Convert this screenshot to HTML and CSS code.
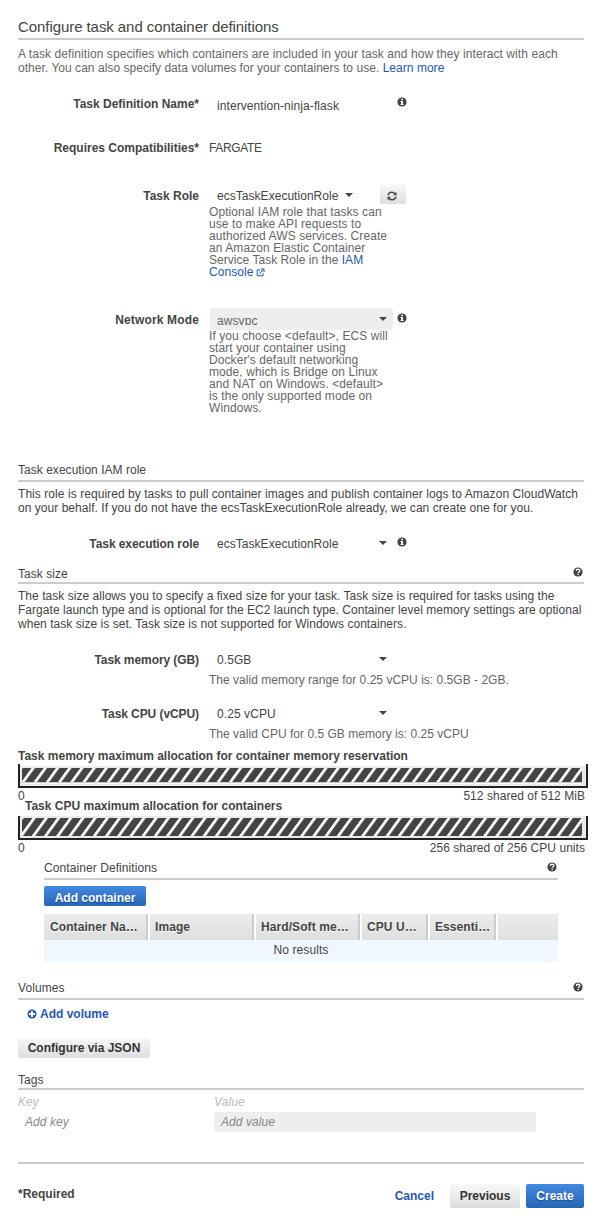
FILE: index.html
```html
<!DOCTYPE html>
<html lang="en">
<head>
<meta charset="utf-8">
<title>Configure task and container definitions</title>
<link rel="stylesheet" href="styles.css">
</head>
<body>
<svg width="0" height="0" class="defs">
  <symbol id="info" viewBox="0 0 10 10"><circle cx="5" cy="5" r="4.6" fill="#444"/><path d="M4.2 1.8h1.700v1.400H4.200zM3.500 4.100h2.400v3h.700v1H3.500v-1h.700V5.100h-.700z" fill="#fff"/></symbol>
  <symbol id="help" viewBox="0 0 10 10"><circle cx="5" cy="5" r="4.6" fill="#444"/><path d="M3.300 3.900C3.300 1.700 6.800 1.700 6.800 3.800 6.800 5 5.200 4.900 5.200 6.100" fill="none" stroke="#fff" stroke-width="1.300"/><path d="M4.500 6.800h1.400v1.300H4.500z" fill="#fff"/></symbol>
  <symbol id="caret" viewBox="0 0 8 4"><path d="M0 0h8L4 4z" fill="#444"/></symbol>
</svg>
<main class="page">
  <h1 class="title">Configure task and container definitions</h1>
  <p class="intro muted">A task definition specifies which containers are included in your task and how they interact with each<br><span class="tight">other. You can also specify data volumes for your containers to use. <a>Learn more</a></span></p>

  <div class="field name-field">
    <span class="label">Task Definition Name*</span>
    <span class="control input">intervention-ninja-flask</span>
    <svg class="icon"><use href="#info"/></svg>
  </div>
  <div class="field compat-field">
    <span class="label">Requires Compatibilities*</span>
    <span class="plain">FARGATE</span>
  </div>
  <div class="field role-field">
    <span class="label">Task Role</span>
    <span class="control short">ecsTaskExecutionRole<svg class="caret"><use href="#caret"/></svg></span>
    <span class="button refresh"><svg width="10" height="10" viewBox="0 0 10 10" fill="none" stroke="#444" stroke-width="1.500"><path d="M1 4.300C1.600 1 5.800.300 7.900 2.600M9 5.700C8.400 9 4.200 9.700 2.100 7.400"/><path d="M9.500.700v3.500H6zM.500 9.300V5.800H4z" fill="#444" stroke="none"/></svg></span>
  </div>
  <p class="hint muted">Optional IAM role that tasks can<br>use to make API requests to<br>authorized AWS services. Create<br>an Amazon Elastic Container<br><span class="tight">Service Task Role in the <a>IAM</a></span><br><a>Console</a><svg class="external" viewBox="0 0 9 9" fill="none" stroke="#1e57b5"><path d="M4.500 2H1.200v5.800H7V5M3.500 5.500L7.500 1.500M5 1h3v3"/></svg></p>

  <div class="field network-field">
    <span class="label">Network Mode</span>
    <span class="control disabled"><span class="clip">awsvpc</span><svg class="caret"><use href="#caret"/></svg></span>
    <svg class="icon"><use href="#info"/></svg>
  </div>
  <p class="hint muted">If you choose &lt;default&gt;, ECS will<br>start your container using<br>Docker's default networking<br>mode, which is Bridge on Linux<br>and NAT on Windows. &lt;default&gt;<br>is the only supported mode on<br>Windows.</p>

  <h2 class="section exec-section">Task execution IAM role</h2>
  <p class="exec-copy">This role is required by tasks to pull container images and publish container logs to Amazon CloudWatch<br><span class="tight">on your behalf. If you do not have the ecsTaskExecutionRole already, we can create one for you.</span></p>
  <div class="field exec-field">
    <span class="label">Task execution role</span>
    <span class="control tight">ecsTaskExecutionRole<svg class="caret"><use href="#caret"/></svg></span>
    <svg class="icon"><use href="#info"/></svg>
  </div>

  <h2 class="section size-section">Task size<svg class="icon"><use href="#help"/></svg></h2>
  <p class="size-copy">The task size allows you to specify a fixed size for your task. Task size is required for tasks using the<br>Fargate launch type and is optional for the EC2 launch type. Container level memory settings are optional<br>when task size is set. Task size is not supported for Windows containers.</p>
  <div class="field memory-field">
    <span class="label">Task memory (GB)</span>
    <span class="control">0.5GB<svg class="caret"><use href="#caret"/></svg></span>
  </div>
  <p class="range muted">The valid memory range for 0.25 vCPU is: 0.5GB - 2GB.</p>
  <div class="field cpu-field">
    <span class="label">Task CPU (vCPU)</span>
    <span class="control">0.25 vCPU<svg class="caret"><use href="#caret"/></svg></span>
  </div>
  <p class="range muted">The valid CPU for 0.5 GB memory is: 0.25 vCPU</p>

  <h3 class="meter-title">Task memory maximum allocation for container memory reservation</h3>
  <div class="meter memory-meter"><svg width="560" height="16"><defs><pattern id="s1" width="12.200" height="14" patternUnits="userSpaceOnUse" patternTransform="translate(9.500 0) skewX(-36)"><path d="M3.400 0h8.800v14H3.400z" fill="#444"/></pattern></defs><rect width="560" height="16" fill="#fff"/><rect width="560" height="14" fill="url(#s1)"/><rect y="14" width="560" height="1" fill="#ccc"/></svg></div>
  <div class="meter-scale"><span>0</span><span class="memory-total">512 shared of 512 MiB</span></div>
  <h3 class="meter-title cpu-title">Task CPU maximum allocation for containers</h3>
  <div class="meter cpu-meter"><svg width="560" height="18"><defs><pattern id="s2" width="12.200" height="18" patternUnits="userSpaceOnUse" patternTransform="translate(10.500 0) skewX(-36)"><path d="M3.400 0h8.800v18H3.400z" fill="#444"/></pattern></defs><rect width="560" height="18" fill="#fff"/><rect width="560" height="18" fill="url(#s2)"/></svg></div>
  <div class="meter-scale"><span>0</span><span class="cpu-total">256 shared of 256 CPU units</span></div>

  <section class="containers">
    <h2 class="section raised">Container Definitions<svg class="icon"><use href="#help"/></svg></h2>
    <span class="button primary add">Add container</span>
    <div class="table-head">
      <span>Container Na…</span><span>Image</span><span>Hard/Soft me…</span><span>CPU U…</span><span>Essenti…</span><span></span>
    </div>
    <div class="empty">No results</div>
  </section>

  <h2 class="section raised volumes">Volumes<svg class="icon"><use href="#help"/></svg></h2>
  <div class="add-volume"><svg width="10" height="10" viewBox="0 0 10 10"><circle cx="5" cy="5" r="4.500" fill="#1e57b5"/><path d="M4 2h2v2h2v2H6v2H4V6H2V4h2z" fill="#fff"/></svg><a>Add volume</a></div>
  <span class="button configure">Configure via JSON</span>

  <h2 class="section tags">Tags</h2>
  <div class="tag-grid">
    <span class="tag-label">Key</span><span class="tag-label">Value</span>
    <span class="tag-input">Add key</span><span class="tag-input filled">Add value</span>
  </div>

  <footer class="footer">
    <span class="required">*Required</span>
    <a class="cancel">Cancel</a>
    <span class="button previous">Previous</span>
    <span class="button primary create">Create</span>
  </footer>
</main>
</body>
</html>
```
FILE: styles.css
```css
* { box-sizing: border-box; }
body { margin: 0; background: #fff; }
.defs { display: block; }
.page {
  width: 616px; height: 1228px; padding: 16px 32px 0 18px; overflow: hidden;
  font: 12px/14px "Liberation Sans", Arial, sans-serif; letter-spacing: 0.08px;
  color: #444; white-space: nowrap;
}
h1, h2, h3, p { margin: 0; font-weight: normal; font-size: 12px; }
a { color: #1e57b5; }
svg { flex: none; }
.muted { color: #666; }
.tight { letter-spacing: 0.035px; }
.title { height: 24px; line-height: 22px; font-size: 15px; letter-spacing: -0.07px; border-bottom: 2px solid #ccc; }
.intro { margin-top: 7px; }
.icon { width: 10px; height: 10px; }
.caret { width: 8px; height: 4px; margin-left: auto; }

.field { display: flex; align-items: center; height: 22px; }
.label { width: 182px; margin-right: 10px; padding-right: 1px; text-align: right; font-weight: bold; letter-spacing: 0; }
.plain { margin-left: -1px; letter-spacing: -0.35px; }
.control { display: flex; align-items: center; width: 183px; height: 22px; padding: 2px 6px 0 7px; border-radius: 2px; }
.control .caret { margin-top: -3px; }
.field .icon { margin: -2px 0 0 4px; }
.short { width: 150px; padding-right: 7px; letter-spacing: 0.035px; }
.disabled { background: #eee; color: #666; }
.clip { height: 10px; overflow: hidden; line-height: 12px; }
.name-field { margin-top: 19px; }
.name-field .label { margin-top: -2px; }
.name-field .icon { margin-top: -6px; }
.compat-field { margin-top: 21px; }
.role-field { margin-top: 25px; }
.role-field .label, .network-field .label { padding-top: 2px; }
.network-field .label { letter-spacing: 0.15px; }
.hint { margin-left: 191px; line-height: 12px; }
.external { width: 9px; height: 9px; margin-left: 2px; vertical-align: -1px; }
.network-field { margin-top: 30px; }
.exec-field .label, .memory-field .label, .cpu-field .label { padding-top: 2px; }
.exec-field .label, .memory-field .label, .cpu-field .label { letter-spacing: -0.08px; }

.section { display: flex; justify-content: space-between; align-items: center; height: 20px; padding-top: 1px; border-bottom: 2px solid #ccc; letter-spacing: 0.03px; }
.section .icon { margin: -3px 1px 0 0; }
.raised { padding: 0 0 2px; letter-spacing: 0.08px; }
.exec-section { margin-top: 49px; height: 19px; padding-top: 0; align-items: flex-start; }
.exec-copy { margin-top: 5px; letter-spacing: 0.06px; }
.exec-field { margin-top: 17px; }
.size-section { margin-top: 10px; }
.size-copy { margin-top: 5px; letter-spacing: 0.035px; }
.memory-field { margin-top: 17px; }
.range { margin: 3px 0 0 191px; letter-spacing: 0.02px; }
.cpu-field { margin-top: 15px; }

.meter-title { margin-top: 8px; height: 15px; font-weight: bold; letter-spacing: 0; }
.meter { width: 570px; height: 24px; padding: 2px; border: 2px solid #222; border-top: 0; }
.meter svg { display: block; }
.memory-meter { padding-top: 4px; background: linear-gradient(#fff 2px, #e9ebeb 2px); }
.cpu-meter { background: #e9ebeb; }
.meter-scale { display: flex; justify-content: space-between; width: 567px; height: 11px; line-height: 16px; letter-spacing: 0.04px; }
.cpu-title { margin: 0 0 0 7px; height: 17px; }

.containers { width: 514px; margin-left: 26px; }
.containers .section { margin-top: 9px; }
.button {
  display: flex; align-items: center; justify-content: center; border-radius: 2px;
  background: linear-gradient(#f8f8f8, #ddd); color: #333; font-weight: bold; letter-spacing: 0;
}
.refresh { width: 26px; height: 20px; margin: -2px 0 0 20px; padding: 3px 2px 0 0; }
.primary { background: linear-gradient(#428ae2, #2864b4); color: #fff; text-shadow: 0 1px 1px #174a90; }
.add { width: 102px; height: 20px; margin-top: 6px; padding-top: 3px; }
.table-head { display: grid; grid-template-columns: 104px 104px 104px 66px 66px 60px; grid-template-rows: 26px; gap: 2px; margin-top: 8px; }
.table-head span { padding: 1px 0 0 5px; line-height: 25px; font-weight: bold; background: linear-gradient(#ededed, #dedede); border-right: 2px solid #ccc; text-shadow: 0 1px #fff; }
.table-head span:first-child { padding-left: 6px; }
.table-head span:last-child { border: 0; }
.empty { height: 22px; line-height: 20px; text-align: center; background: #f0f7ff; }
.volumes { margin-top: 18px; }
.add-volume { display: flex; align-items: center; gap: 3px; margin: 7px 0 0 9px; font-weight: bold; letter-spacing: 0; }
.configure { width: 132px; height: 20px; margin-top: 17px; }
.tags { margin-top: 14px; height: 18px; padding-top: 0; }
.tag-grid { display: grid; grid-template-columns: 176px 322px; grid-template-rows: 14px 20px; gap: 3px 20px; margin-top: 5px; font-style: italic; }
.tag-label { color: #bbb; }
.tag-input { padding-left: 7px; line-height: 20px; color: #888; border-radius: 2px; }
.filled { background: #eee; }
.footer { display: flex; align-items: center; height: 66px; margin-top: 30px; border-top: 2px solid #ccc; font-weight: bold; letter-spacing: 0; }
.required { margin-right: auto; margin-top: -4px; }
.cancel { margin-right: 16px; }
.previous { width: 70px; height: 24px; }
.create { width: 58px; height: 24px; margin-left: 6px; }
```
